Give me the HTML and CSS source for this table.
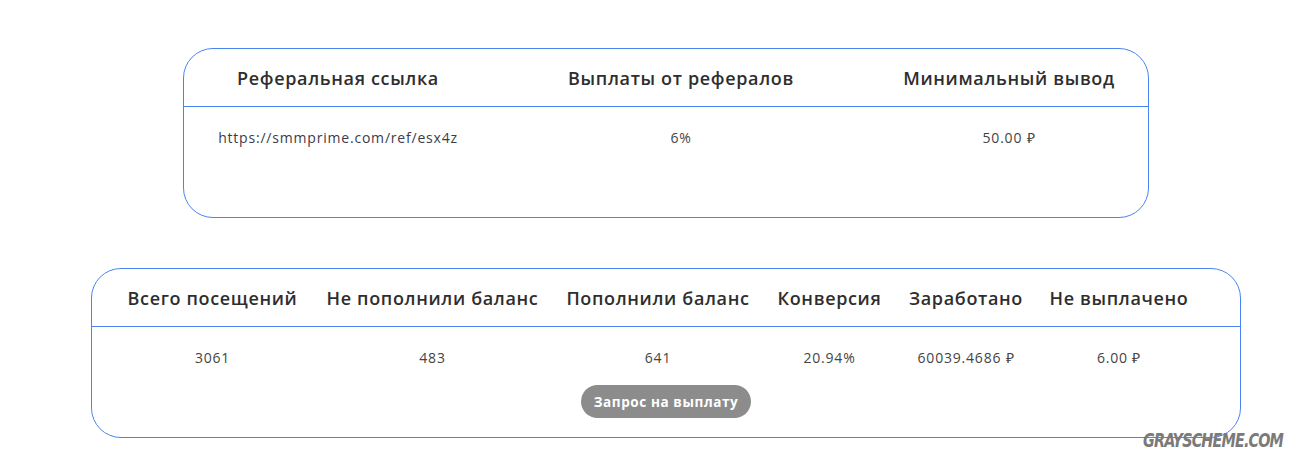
FILE: index.html
```html
<!DOCTYPE html>
<html lang="ru">
<head>
<meta charset="UTF-8" />
<meta name="viewport" content="width=device-width, initial-scale=1" />
<title>Партнёрская программа</title>
<link rel="stylesheet" href="styles.css">
</head>
<body>

<div class="page">
  <div class="card card-ref">
    <div class="row head ref-cols">
      <div>Реферальная ссылка</div>
      <div>Выплаты от рефералов</div>
      <div>Минимальный вывод</div>
    </div>
    <div class="row body ref-cols">
      <div class="link">https://smmprime.com/ref/esx4z</div>
      <div>6%</div>
      <div>50.00 ₽</div>
    </div>
  </div>

  <div class="card card-stats">
    <div class="row head stat-cols">
      <div>Всего посещений</div>
      <div>Не пополнили баланс</div>
      <div>Пополнили баланс</div>
      <div>Конверсия</div>
      <div>Заработано</div>
      <div>Не выплачено</div>
    </div>
    <div class="row body stat-cols">
      <div>3061</div>
      <div>483</div>
      <div>641</div>
      <div>20.94%</div>
      <div>60039.4686 ₽</div>
      <div>6.00 ₽</div>
    </div>
    <div class="actions">
      <button class="payout-btn">Запрос на выплату</button>
    </div>
  </div>
</div>

<div class="watermark">GRAYSCHEME.COM</div>

</body>
</html>
```

FILE: styles.css
```css
body {
  margin: 0;
  background: #fff;
  font-family: "Open Sans", Arial, sans-serif;
  color: #333;
}
.page {
  width: 1150px;
  margin-left: 91px;
  padding-top: 48px;
}
.card {
  border: 1px solid #4a84f2;
  border-radius: 30px;
  box-sizing: border-box;
}
.card-ref {
  width: 966px;
  height: 170px;
  margin: 0 auto;
}
.card-stats {
  width: 1150px;
  margin-top: 50px;
}
.row {
  display: grid;
  text-align: center;
}
.head {
  height: 57px;
  align-items: center;
  border-bottom: 1px solid #4a84f2;
  font-size: 18px;
  font-weight: 600;
  letter-spacing: 0.65px;
  color: #2e2e2e;
}
.body {
  padding-top: 21px;
  font-size: 14px;
  line-height: 20px;
  letter-spacing: 0.8px;
  color: #444;
}
.ref-cols {
  grid-template-columns: 308px 378px 1fr;
}
.stat-cols {
  grid-template-columns: 199px 241px 210px 133px 140px 166px;
  padding-left: 21px;
}
.link {
  color: #3b3b4b;
}
.actions {
  display: flex;
  justify-content: center;
  padding: 17px 0 19px;
}
.payout-btn {
  height: 33px;
  padding: 0 13px;
  border: none;
  border-radius: 17px;
  background: #8c8c8c;
  color: #fff;
  font-family: "Open Sans", Arial, sans-serif;
  font-size: 13.5px;
  font-weight: 700;
  letter-spacing: 0.6px;
  cursor: pointer;
}
.watermark {
  position: absolute;
  left: 1143px;
  top: 429px;
  font-family: "DejaVu Sans Condensed", "Liberation Sans", sans-serif;
  font-size: 19px;
  font-weight: 700;
  font-style: italic;
  letter-spacing: -1px;
  color: #7a7a7a;
  transform: scaleX(0.84);
  transform-origin: left top;
}
```
